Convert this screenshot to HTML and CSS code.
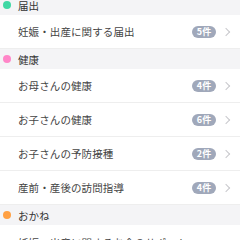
FILE: index.html
```html
<!DOCTYPE html>
<html lang="ja">
<head>
<meta charset="utf-8">
<link rel="stylesheet" href="styles.css">
</head>
<body>
<div class="list">
  <div class="section"><span class="dot green"></span><span>届出</span></div>
  <div class="row"><span class="label">妊娠・出産に関する届出</span><span class="badge">5件</span><span class="chev"></span></div>
  <div class="section"><span class="dot pink"></span><span>健康</span></div>
  <div class="row"><span class="label">お母さんの健康</span><span class="badge">4件</span><span class="chev"></span></div>
  <div class="row"><span class="label">お子さんの健康</span><span class="badge">6件</span><span class="chev"></span></div>
  <div class="row"><span class="label">お子さんの予防接種</span><span class="badge">2件</span><span class="chev"></span></div>
  <div class="row"><span class="label">産前・産後の訪問指導</span><span class="badge">4件</span><span class="chev"></span></div>
  <div class="section"><span class="dot orange"></span><span>おかね</span></div>
  <div class="row"><span class="label">妊娠・出産に関するお金のサポート</span></div>
</div>
</body>
</html>
```
FILE: styles.css
```css
html, body { margin: 0; padding: 0; background: #fff; overflow: hidden; }
body { width: 240px; height: 240px; font-family: "Noto Sans CJK JP", "Noto Sans", sans-serif; color: #3a3a3a; }
.list { margin-top: -5px; display: flex; flex-direction: column; }
.section { height: 20px; background: #f4f4f6; display: flex; align-items: center; padding-left: 3px; gap: 7px; font-size: 10.5px; color: #333; }
.dot { width: 8px; height: 8px; border-radius: 50%; flex: none; }
.green { background: #3fd8a4; }
.pink { background: #ff86c8; }
.orange { background: #ffa043; }
.row { height: 34px; box-sizing: border-box; display: flex; align-items: center; padding: 0 10px 0 18px; border-bottom: 1px solid #eeeeee; font-size: 10.5px; letter-spacing: 0.1px; }
.row:last-child { border-bottom: none; }
.label { flex: 1; white-space: nowrap; overflow: hidden; color: #444; }
.badge { background: #a0a8ba; color: #fff; font-size: 9px; font-weight: bold; height: 12px; line-height: 12px; width: 24px; text-align: center; border-radius: 6px; letter-spacing: 0; margin-right: 7px; }
.chev { width: 5px; height: 5px; border-top: 1px solid #c8c8cc; border-right: 1px solid #c8c8cc; transform: rotate(45deg); margin-right: 1px; }
```
